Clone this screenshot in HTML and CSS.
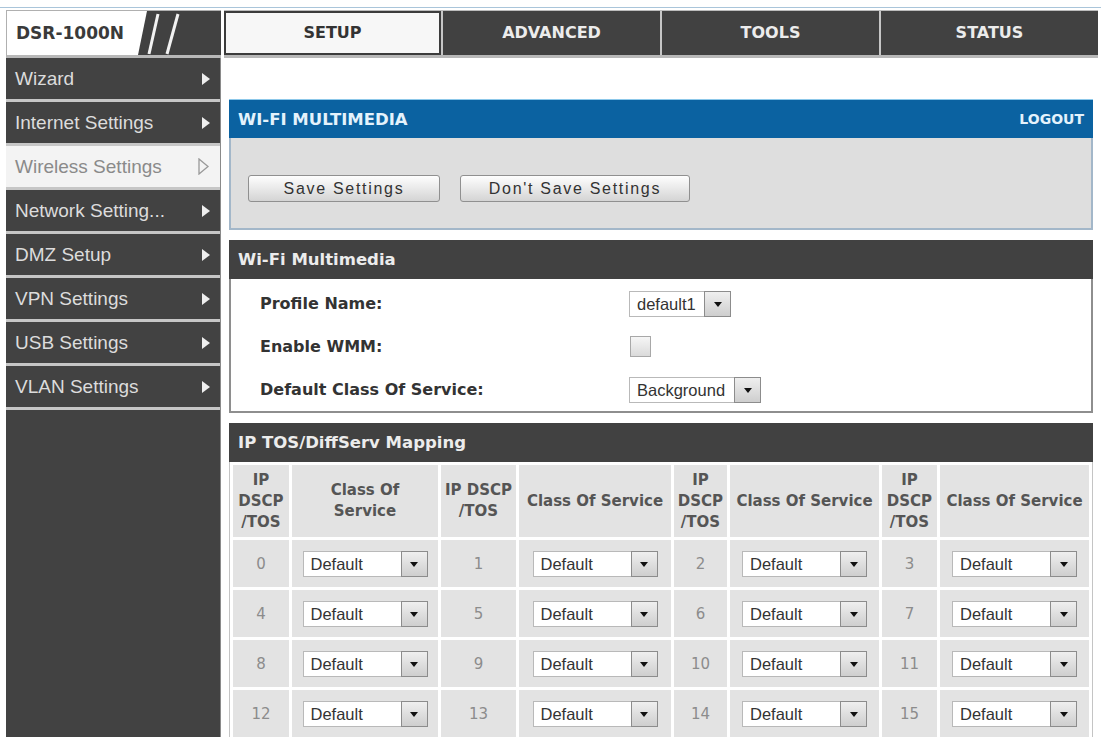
FILE: index.html
```html
<!DOCTYPE html>
<html lang="en">
<head>
    <meta charset="utf-8">
    <meta name='viewport' content='width=device-width, initial-scale=1'>
    <link rel="stylesheet" href="styles.css">
    <title>DSR-1000N - Wi-Fi Multimedia</title>
</head>
<body>
<div class="topline"></div>
<header class="masthead">
    <div class="logo">
        <span class="logoText">DSR-1000N</span>
        <svg class="logoMark" width="83" height="44" viewBox="0 0 83 44">
            <polygon points="9,0 83,0 83,44 0,44" fill="#414141"/>
            <line x1="20" y1="3" x2="11" y2="43" stroke="#f2f2f2" stroke-width="3"/>
            <line x1="40" y1="3" x2="29" y2="43" stroke="#f2f2f2" stroke-width="3"/>
        </svg>
    </div>
    <nav class="tabs">
        <a class="tab active">SETUP</a>
        <a class="tab">ADVANCED</a>
        <a class="tab">TOOLS</a>
        <a class="tab">STATUS</a>
    </nav>
</header>

<div class="layout">
    <nav class="sidebar">
        <a class="menuItem">Wizard<svg class="arrow" width="8" height="12"><polygon points="0,0 8,6 0,12"/></svg></a>
        <a class="menuItem">Internet Settings<svg class="arrow" width="8" height="12"><polygon points="0,0 8,6 0,12"/></svg></a>
        <a class="menuItem active">Wireless Settings<svg class="arrow" width="12" height="17"><polygon points="1,1 10,8.5 1,16"/></svg></a>
        <a class="menuItem">Network Setting...<svg class="arrow" width="8" height="12"><polygon points="0,0 8,6 0,12"/></svg></a>
        <a class="menuItem">DMZ Setup<svg class="arrow" width="8" height="12"><polygon points="0,0 8,6 0,12"/></svg></a>
        <a class="menuItem">VPN Settings<svg class="arrow" width="8" height="12"><polygon points="0,0 8,6 0,12"/></svg></a>
        <a class="menuItem">USB Settings<svg class="arrow" width="8" height="12"><polygon points="0,0 8,6 0,12"/></svg></a>
        <a class="menuItem">VLAN Settings<svg class="arrow" width="8" height="12"><polygon points="0,0 8,6 0,12"/></svg></a>
    </nav>

    <main class="content">
        <section>
            <div class="blueHead">
                <h1>WI-FI MULTIMEDIA</h1>
                <a class="logout">LOGOUT</a>
            </div>
            <div class="actions">
                <button class="btn btnSave">Save Settings</button>
                <button class="btn btnCancel">Don't Save Settings</button>
            </div>
        </section>

        <section class="panel">
            <h2 class="panelHead">Wi-Fi Multimedia</h2>
            <div class="fields">
                <div class="field">
                    <label>Profile Name:</label>
                    <span class="sel selProfile"><span class="selVal">default1</span><span class="selBtn"></span></span>
                </div>
                <div class="field">
                    <label>Enable WMM:</label>
                    <input class="check" type="checkbox">
                </div>
                <div class="field">
                    <label>Default Class Of Service:</label>
                    <span class="sel selClass"><span class="selVal">Background</span><span class="selBtn"></span></span>
                </div>
            </div>
        </section>

        <section class="panel">
            <h2 class="panelHead">IP TOS/DiffServ Mapping</h2>
            <table class="map">
                <colgroup>
                    <col><col><col><col><col><col><col><col>
                </colgroup>
                <tr>
                    <th>IP<br>DSCP<br>/TOS</th>
                    <th>Class Of<br>Service</th>
                    <th>IP DSCP<br>/TOS</th>
                    <th>Class Of Service</th>
                    <th>IP<br>DSCP<br>/TOS</th>
                    <th>Class Of Service</th>
                    <th>IP<br>DSCP<br>/TOS</th>
                    <th>Class Of Service</th>
                </tr>
                <tr>
                    <td class="num">0</td>
                    <td><span class="sel"><span class="selVal">Default</span><span class="selBtn"></span></span></td>
                    <td class="num">1</td>
                    <td><span class="sel"><span class="selVal">Default</span><span class="selBtn"></span></span></td>
                    <td class="num">2</td>
                    <td><span class="sel"><span class="selVal">Default</span><span class="selBtn"></span></span></td>
                    <td class="num">3</td>
                    <td><span class="sel"><span class="selVal">Default</span><span class="selBtn"></span></span></td>
                </tr>
                <tr>
                    <td class="num">4</td>
                    <td><span class="sel"><span class="selVal">Default</span><span class="selBtn"></span></span></td>
                    <td class="num">5</td>
                    <td><span class="sel"><span class="selVal">Default</span><span class="selBtn"></span></span></td>
                    <td class="num">6</td>
                    <td><span class="sel"><span class="selVal">Default</span><span class="selBtn"></span></span></td>
                    <td class="num">7</td>
                    <td><span class="sel"><span class="selVal">Default</span><span class="selBtn"></span></span></td>
                </tr>
                <tr>
                    <td class="num">8</td>
                    <td><span class="sel"><span class="selVal">Default</span><span class="selBtn"></span></span></td>
                    <td class="num">9</td>
                    <td><span class="sel"><span class="selVal">Default</span><span class="selBtn"></span></span></td>
                    <td class="num">10</td>
                    <td><span class="sel"><span class="selVal">Default</span><span class="selBtn"></span></span></td>
                    <td class="num">11</td>
                    <td><span class="sel"><span class="selVal">Default</span><span class="selBtn"></span></span></td>
                </tr>
                <tr>
                    <td class="num">12</td>
                    <td><span class="sel"><span class="selVal">Default</span><span class="selBtn"></span></span></td>
                    <td class="num">13</td>
                    <td><span class="sel"><span class="selVal">Default</span><span class="selBtn"></span></span></td>
                    <td class="num">14</td>
                    <td><span class="sel"><span class="selVal">Default</span><span class="selBtn"></span></span></td>
                    <td class="num">15</td>
                    <td><span class="sel"><span class="selVal">Default</span><span class="selBtn"></span></span></td>
                </tr>
            </table>
        </section>
    </main>
</div>
</body>
</html>
```

FILE: styles.css
```css
/* page */
html, body { margin: 0; padding: 0; height: 100%; overflow: hidden; background: #fff; }
body { font-family: "DejaVu Sans", Verdana, sans-serif; color: #333; }
a { color: inherit; text-decoration: none; }

.topline { margin-top: 7px; border-top: 1px solid #a9c5da; }

/* masthead: logo + tabs */
.masthead { display: flex; gap: 3px; height: 48px; margin: 2px 3px 0 6px; }
.logo { width: 215px; box-sizing: border-box; display: flex; background: #fff; border-top: 1px solid #b0b0b0; border-left: 1px solid #b0b0b0; border-bottom: 3px solid #b8b8b8; }
.logoText { flex: 1; padding-left: 9px; font-size: 17px; font-weight: bold; line-height: 44px; color: #3a3a3a; }
.logoMark { display: block; }

.tabs { flex: 1; display: flex; gap: 2px; background: #c6c6c6; border-top: 1px solid #bcbcbc; border-bottom: 3px solid #b8b8b8; }
.tab { flex: 1; background: #414141; color: #ececec; font-size: 16px; font-weight: bold; line-height: 44px; text-align: center; }
.tab.active { background: #f7f7f7; color: #333; box-shadow: inset 0 0 0 2px #3c3c3c; }

/* sidebar + content */
.layout { display: grid; grid-template-columns: 215px 864px; column-gap: 8px; margin-left: 6px; min-height: 690px; }

.sidebar { background: #424242; border-right: 1px solid #8a8a8a; }
.menuItem { display: flex; align-items: center; justify-content: space-between; height: 41px; padding: 0 10px 0 9px; border-bottom: 3px solid #c6c6c6; font-family: "Liberation Sans", Arial, sans-serif; font-size: 19px; color: #dcdcdc; }
.menuItem .arrow { fill: #eee; }
.menuItem.active { background: #f3f3f3; color: #8a8a8a; }
.menuItem.active .arrow { fill: none; stroke: #999; stroke-width: 1.3; }

.content { padding-top: 41px; }

.blueHead { display: flex; justify-content: space-between; align-items: center; height: 38px; padding: 0 9px; background: #0b62a1; border-top: 1px solid #8cc8ea; color: #e4f2fc; font-weight: bold; }
.blueHead h1 { margin: 0; font-size: 16.5px; }
.logout { font-size: 14px; }

.actions { display: flex; gap: 20px; align-items: flex-start; height: 92px; box-sizing: border-box; padding: 37px 0 0 17px; background: #dedede; border: 2px solid #a3b7c9; border-top: 0; }
.btn { height: 27px; padding: 0; border: 1px solid #909090; border-radius: 3px; background: linear-gradient(#fefefe, #d4d4d4); font-family: "Liberation Sans", Arial, sans-serif; font-size: 16px; letter-spacing: 1.7px; color: #333; }
.btnSave { width: 192px; }
.btnCancel { width: 230px; }

.panel { margin-top: 10px; }
.panelHead { margin: 0; height: 39px; padding-left: 9px; background: #414141; color: #ececec; font-size: 16.5px; font-weight: bold; line-height: 39px; }

.fields { padding-top: 3px; border: 2px solid #8e8e8e; border-top: 0; }
.field { display: grid; grid-template-columns: 369px 1fr; align-items: center; height: 43px; padding-left: 29px; }
.field label { font-size: 16px; font-weight: bold; color: #333; }
.field > .sel, .field > .check { justify-self: start; }

/* fake select box */
.sel { display: inline-flex; width: 125px; height: 26px; box-sizing: border-box; border: 1px solid #b9b9b9; background: #fff; font-family: "Liberation Sans", Arial, sans-serif; font-size: 16.5px; color: #333; vertical-align: middle; }
.selVal { flex: 1; padding-left: 7px; line-height: 24px; text-align: left; }
.selBtn { display: flex; align-items: center; justify-content: center; width: 27px; margin: -1px -1px -1px 0; box-sizing: border-box; border: 1px solid #8c8c8c; background: linear-gradient(#efefef, #cecece); }
.selBtn::after { content: ""; margin-top: 2px; border-left: 4px solid transparent; border-right: 4px solid transparent; border-top: 5px solid #111; }
.selProfile { width: 102px; }
.selClass { width: 132px; }

.check { appearance: none; -webkit-appearance: none; width: 21px; height: 21px; margin: 0 0 0 1px; box-sizing: border-box; border: 1px solid #a8a8a8; background: linear-gradient(#f6f6f6, #dadada); }

/* mapping table */
.map { width: 100%; table-layout: fixed; border-spacing: 3px; border: 1px solid #c4c4c4; border-top: 0; }
.map col:nth-child(1) { width: 56px; }
.map col:nth-child(2) { width: 146px; }
.map col:nth-child(3) { width: 75px; }
.map col:nth-child(4) { width: 152px; }
.map col:nth-child(5) { width: 53px; }
.map col:nth-child(6) { width: 149px; }
.map col:nth-child(7) { width: 55px; }
.map col:nth-child(8) { width: 149px; }
.map th, .map td { padding: 0; background: #e3e3e3; text-align: center; }
.map th { height: 72px; font-size: 15px; line-height: 21px; color: #555; }
.map td { height: 47px; }
.num { font-size: 15px; color: #8c8c8c; }
```
